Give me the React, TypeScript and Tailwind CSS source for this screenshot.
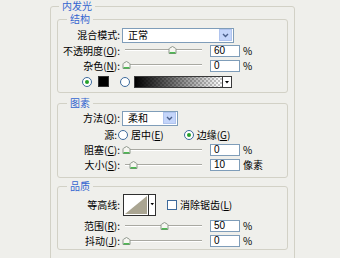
import React from 'react';

function Thumb() {
  return (
    <svg width="9" height="8" viewBox="0 0 9 8">
      <path d="M1 7.5 V3.2 Q1 2.6 1.6 2.2 L4.5 0.5 L7.4 2.2 Q8 2.6 8 3.2 V7.5 Z" fill="#f6f6f1" stroke="#8e978c" strokeWidth="1" />
      <path d="M1.6 6.8 H7.4" stroke="#2fae36" strokeWidth="1.3" />
    </svg>
  );
}

function Slider({ pos }: { pos: string }) {
  return (
    <div className="relative w-[80px] h-[9px] ml-[2px]">
      <div className="absolute left-[3px] right-0 top-[3px] h-[2px] border-t border-t-[#a9a9a2] border-b border-b-white" />
      <div className={`absolute top-0 flex ${pos}`}>
        <Thumb />
      </div>
    </div>
  );
}

function Num({ v }: { v: string }) {
  return (
    <div className="ml-[8px] w-[30px] h-[12px] border border-[#7f9db9] bg-white pl-[3px] flex items-center font-['Liberation_Sans',sans-serif] text-[10px] leading-none">
      {v}
    </div>
  );
}

function Label({ children, w = 'w-[62px]' }: { children: React.ReactNode; w?: string }) {
  return <div className={`${w} shrink-0 text-right whitespace-nowrap`}>{children}</div>;
}

function Radio({ on }: { on?: boolean }) {
  return (
    <div className="w-[10px] h-[10px] rounded-full border border-[#3d6a9c] bg-white flex items-center justify-center shrink-0">
      {on && <div className="w-[4px] h-[4px] rounded-full bg-[#25a12b]" />}
    </div>
  );
}

function Arrow() {
  return (
    <div className="w-[13px] h-[12px] bg-[#c4d5fa] border border-[#b0c4ee] flex items-center justify-center">
      <svg width="7" height="5" viewBox="0 0 7 5">
        <path d="M1 1 L3.5 3.5 L6 1" fill="none" stroke="#4a5f8a" strokeWidth="1.4" />
      </svg>
    </div>
  );
}

function Select({ w, text }: { w: string; text: string }) {
  return (
    <div className={`${w} ml-[2px] h-[15px] border border-[#7f9db9] bg-white flex items-center justify-between pl-[5px] pr-[1px]`}>
      <span>{text}</span>
      <Arrow />
    </div>
  );
}

function Gradient() {
  return (
    <svg width="98" height="12" viewBox="0 0 98 12" className="ml-[4px]">
      <defs>
        <pattern id="chk" width="4" height="4" patternUnits="userSpaceOnUse">
          <rect width="4" height="4" fill="#ffffff" />
          <rect width="2" height="2" fill="#c8c8c8" />
          <rect x="2" y="2" width="2" height="2" fill="#c8c8c8" />
        </pattern>
        <linearGradient id="fade" x1="0" x2="1" y1="0" y2="0">
          <stop offset="0" stopColor="#000" stopOpacity="1" />
          <stop offset="1" stopColor="#000" stopOpacity="0" />
        </linearGradient>
      </defs>
      <rect x="0.5" y="0.5" width="97" height="11" fill="#fff" stroke="#3a3a3a" />
      <rect x="1" y="1" width="87" height="10" fill="url(#chk)" />
      <rect x="1" y="1" width="87" height="10" fill="url(#fade)" />
      <path d="M88.5 1 V11" stroke="#3a3a3a" />
      <path d="M91 5 H95 L93 7.5 Z" fill="#000" />
    </svg>
  );
}

function Contour() {
  return (
    <svg width="33" height="22" viewBox="0 0 33 22" className="ml-[3px]">
      <rect x="0.5" y="0.5" width="32" height="21" fill="#fff" stroke="#2f2f2f" />
      <path d="M2 20 L24 2 V20 Z" fill="#aaa592" />
      <path d="M25.5 1 V21" stroke="#2f2f2f" />
      <path d="M27.5 9 H31 L29.25 11.2 Z" fill="#000" />
    </svg>
  );
}

function Check() {
  return <div className="ml-[11px] w-[10px] h-[10px] border border-[#3d6a9c] bg-white shrink-0" />;
}

const box = 'border border-[#d2d1c6] rounded-[3px]';
const legend = 'ml-[9px] px-[3px] h-[12px] leading-[12px] text-[#3466d0]';

export default function App() {
  return (
    <div className="w-[340px] h-[258px] overflow-hidden bg-[#efefeb] pl-[50px] font-['Noto_Sans_CJK_SC','Noto_Sans',sans-serif] text-[10px] leading-none text-black">
      <fieldset className={`w-[245px] ${box} px-[6px] pb-[12px]`}>
        <legend className="ml-[2px] px-[3px] h-[12px] leading-[12px] text-[#3466d0]">内发光</legend>

        <fieldset className={`mt-[1px] ${box} pt-[2px] pb-[2px]`}>
          <legend className={legend}>结构</legend>
          <div className="flex items-center h-[16px]">
            <Label>混合模式:</Label>
            <Select w="w-[112px]" text="正常" />
          </div>
          <div className="flex items-center h-[15px]">
            <Label>不透明度(<u>O</u>):</Label>
            <Slider pos="left-[46px]" />
            <Num v="60" />
            <span className="ml-[3px]">%</span>
          </div>
          <div className="flex items-center h-[15px]">
            <Label>杂色(<u>N</u>):</Label>
            <Slider pos="left-0" />
            <Num v="0" />
            <span className="ml-[3px]">%</span>
          </div>
          <div className="flex items-center h-[17px] pl-[24px]">
            <Radio on />
            <div className="ml-[6px] w-[11px] h-[11px] bg-black border border-[#333]" />
            <div className="ml-[11px]">
              <Radio />
            </div>
            <Gradient />
          </div>
        </fieldset>

        <fieldset className={`mt-[4px] ${box} pt-[1px] pb-[4px]`}>
          <legend className={legend}>图素</legend>
          <div className="flex items-center h-[16px]">
            <Label>方法(<u>Q</u>):</Label>
            <Select w="w-[56px]" text="柔和" />
          </div>
          <div className="flex items-center h-[17px]">
            <Label w="w-[59px]">源:</Label>
            <div className="ml-[1px]">
              <Radio />
            </div>
            <span className="ml-[3px]">居中(<u>E</u>)</span>
            <div className="ml-[20px]">
              <Radio on />
            </div>
            <span className="ml-[3px]">边缘(<u>G</u>)</span>
          </div>
          <div className="flex items-center h-[14px]">
            <Label>阻塞(<u>C</u>):</Label>
            <Slider pos="left-0" />
            <Num v="0" />
            <span className="ml-[3px]">%</span>
          </div>
          <div className="flex items-center h-[16px]">
            <Label>大小(<u>S</u>):</Label>
            <Slider pos="left-[7px]" />
            <Num v="10" />
            <span className="ml-[3px]">像素</span>
          </div>
        </fieldset>

        <fieldset className={`mt-[2px] ${box} pb-[1px]`}>
          <legend className={legend}>品质</legend>
          <div className="flex items-center h-[26px]">
            <Label>等高线:</Label>
            <Contour />
            <Check />
            <span className="ml-[3px]">消除锯齿(<u>L</u>)</span>
          </div>
          <div className="flex items-center h-[16px]">
            <Label>范围(<u>R</u>):</Label>
            <Slider pos="left-[38px]" />
            <Num v="50" />
            <span className="ml-[3px]">%</span>
          </div>
          <div className="flex items-center h-[14px]">
            <Label>抖动(<u>J</u>):</Label>
            <Slider pos="left-0" />
            <Num v="0" />
            <span className="ml-[3px]">%</span>
          </div>
        </fieldset>
      </fieldset>
    </div>
  );
}
